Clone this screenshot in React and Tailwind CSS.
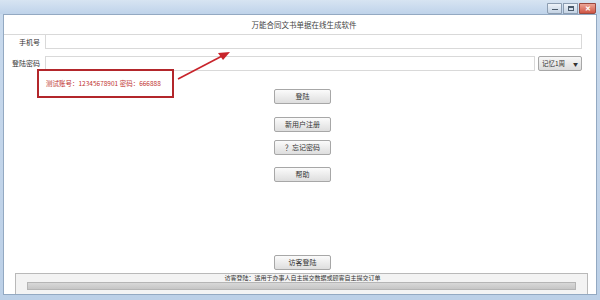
import React from "react";

const F = { fontFamily: '"Noto Sans CJK SC", "Noto Sans", sans-serif' };

function Btn({ children, className = "" }) {
  return (
    <div
      className={
        "flex h-[15px] w-[57px] items-center justify-center rounded-[2px] border border-[#a7a7a7] bg-gradient-to-b from-[#fbfbfb] to-[#dedede] text-[7px] leading-none text-[#333] " +
        className
      }
    >
      {children}
    </div>
  );
}

export default function App() {
  return (
    <div
      style={F}
      className="relative flex h-[300px] w-[600px] flex-col overflow-hidden bg-gradient-to-b from-[#c9daed] to-[#bcd0e7]"
    >
      {/* title bar */}
      <div className="relative h-[14px] w-full bg-gradient-to-b from-[#d7e4f2] to-[#bfd3ea]">
        <div className="absolute right-[4px] top-[3px] flex gap-[1px]">
          <div className="flex h-[11px] w-[15px] items-end justify-center rounded-bl-[2px] border border-[#8c9db1] bg-gradient-to-b from-[#eef3f9] to-[#c3d2e3] pb-[3px]">
            <div className="h-[1px] w-[6px] bg-[#4b5b6c]" />
          </div>
          <div className="flex h-[11px] w-[15px] items-center justify-center border border-[#8c9db1] bg-gradient-to-b from-[#eef3f9] to-[#c3d2e3]">
            <div className="h-[5px] w-[6px] border border-t-2 border-[#4b5b6c]" />
          </div>
          <div className="flex h-[11px] w-[17px] items-center justify-center rounded-br-[2px] border border-[#9a4a40] bg-gradient-to-b from-[#eca597] to-[#cf5444]">
            <span className="text-[7px] font-bold leading-none text-white">✕</span>
          </div>
        </div>
      </div>

      {/* client area */}
      <div className="relative mx-[3px] mb-[5px] flex flex-1 flex-col border border-[#93a9c2] bg-white">
        <div className="flex h-[19px] items-center justify-center pl-[8px] text-[7.5px] leading-none text-[#444]">
          万能合同文书单据在线生成软件
        </div>

        {/* row 1 */}
        <div className="flex h-[15px] pr-[14px]">
          <div className="flex w-[41px] items-center justify-end border-t border-[#d9d9d9] pr-[5px] text-[7px] leading-none text-[#333]">
            手机号
          </div>
          <div className="flex-1 border border-[#d9d9d9] bg-white" />
        </div>

        {/* row 2 */}
        <div className="mt-[7px] flex h-[15px] pr-[14px]">
          <div className="flex w-[41px] items-center justify-end pr-[5px] text-[7px] leading-none text-[#333]">
            登陆密码
          </div>
          <div className="w-[490px] border border-[#d9d9d9] bg-white" />
          <div className="ml-[3px] flex flex-1 items-center justify-between rounded-[2px] border border-[#a7a7a7] bg-gradient-to-b from-[#f8f8f8] to-[#dcdcdc] px-[3px] text-[6.5px] leading-none text-[#333]">
            <span>记忆1周</span>
            <span className="text-[5px]">▼</span>
          </div>
        </div>

        {/* buttons */}
        <div className="ml-[270px] flex flex-col">
          <Btn className="mt-[18px]">登陆</Btn>
          <Btn className="mt-[13px]">新用户注册</Btn>
          <Btn className="mt-[8px]">？忘记密码</Btn>
          <Btn className="mt-[12px]">帮助</Btn>
          <Btn className="mt-[73px]">访客登陆</Btn>
        </div>

        {/* bottom panel */}
        <div className="ml-[11px] mr-[8px] mt-[3px] flex flex-1 flex-col border border-b-0 border-[#b9b9b9] bg-[#f3f3f3]">
          <div className="flex h-[7px] items-center justify-center pl-[2px] text-[6px] leading-none text-[#333]">
            访客登陆：适用于办事人自主提交数据或顾客自主提交订单
          </div>
          <div className="mx-[11px] mt-[1px] h-[8px] border border-[#b5b5b5] bg-gradient-to-b from-[#d8d8d8] to-[#c6c6c6]" />
        </div>

        {/* annotation box */}
        <div className="absolute left-[33px] top-[54px] flex h-[29px] w-[137px] items-center border-2 border-solid border-[#b3262b] pl-[7px]">
          <span className="text-[6.5px] leading-none text-[#c0322f]">
            测试账号：12345678901 密码：666888
          </span>
        </div>
        {/* arrow */}
        <svg
          className="absolute left-[170px] top-[34px]"
          width="60"
          height="34"
          viewBox="0 0 60 34"
        >
          <line x1="4" y1="30" x2="50" y2="6" stroke="#c8242b" strokeWidth="1.6" />
          <polygon points="56,3 44,4 49,11" fill="#c8242b" />
        </svg>
      </div>
    </div>
  );
}
